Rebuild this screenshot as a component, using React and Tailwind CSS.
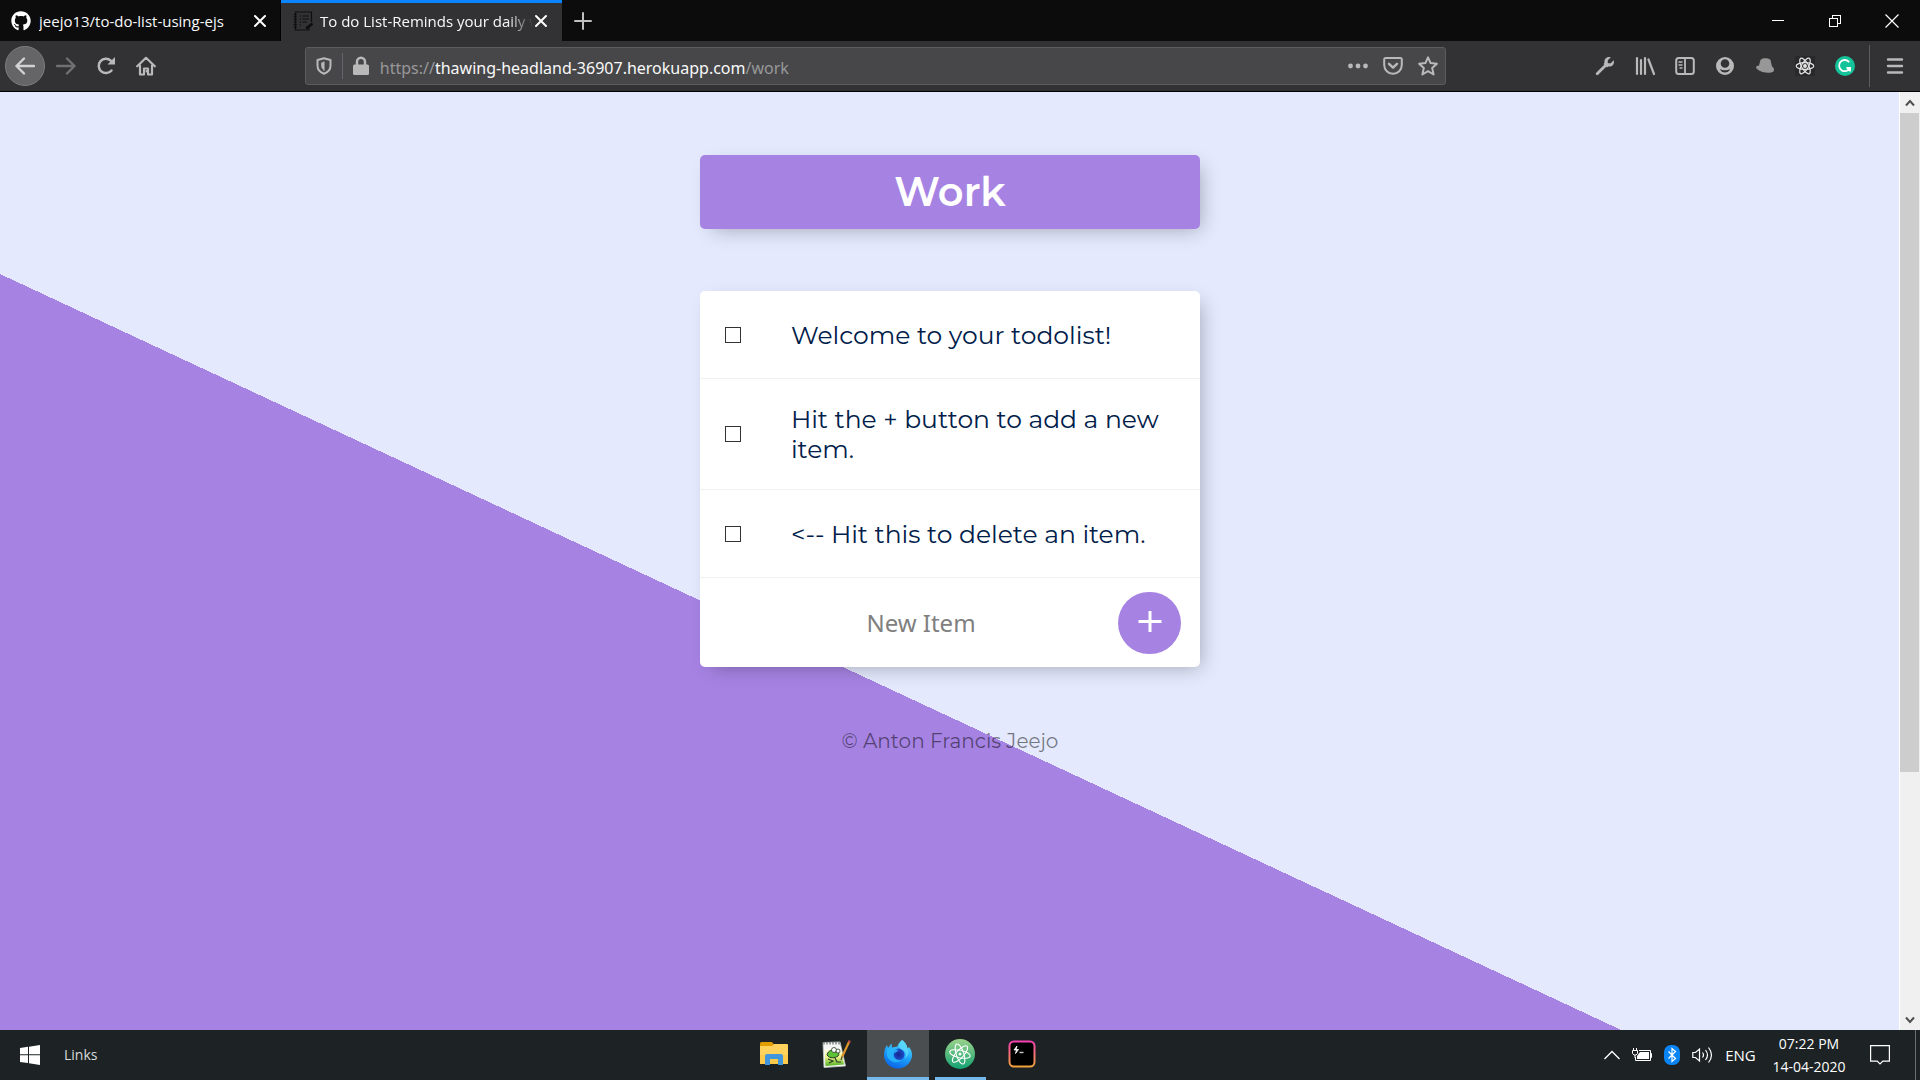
import { FaGithub } from "react-icons/fa";

const items = [
  "Welcome to your todolist!",
  "Hit the + button to add a new item.",
  "<-- Hit this to delete an item.",
];

function Svg({ children, className = "size-5", viewBox = "0 0 20 20" }) {
  return (
    <svg
      viewBox={viewBox}
      className={className}
      fill="none"
      stroke="currentColor"
      strokeWidth="2"
      strokeLinecap="round"
      strokeLinejoin="round"
      aria-hidden="true"
    >
      {children}
    </svg>
  );
}

function CloseIcon() {
  return (
    <Svg className="size-4" viewBox="0 0 16 16">
      <path d="M3 3l10 10M13 3L3 13" />
    </Svg>
  );
}

function NotebookIcon() {
  return (
    <svg viewBox="0 0 20 20" className="size-5 shrink-0" fill="none" stroke="#0e0e10" strokeWidth="1.2" aria-hidden="true">
      <path d="M16 14.5V19H2.5V1H18.5V11" />
      <path d="M0.5 3.5H4M0.5 6H4M0.5 8.5H4M0.5 11H4M0.5 13.5H4M0.5 16H4" />
      <path d="M6.5 5h1.5M9.5 5H16M6.5 8h1.5M9.5 8H16M6.5 11h1.5M9.5 11H14M6.5 14h1.5" />
      <path d="M19.5 12.5L13 17.5" strokeWidth="2.4" />
    </svg>
  );
}

function TabBar() {
  return (
    <header className="flex h-[41px] shrink-0 items-stretch bg-[#0c0c0d] text-[#f9f9fa]">
      <div className="flex w-[281px] shrink-0 items-center border-r border-black pl-[11px] pr-3">
        <FaGithub className="size-5 shrink-0 text-white" />
        <span className="ml-2 min-w-0 flex-1 overflow-hidden whitespace-nowrap text-[15px] leading-5">jeejo13/to-do-list-using-ejs</span>
        <button aria-label="Close tab" className="ml-1.5 text-white">
          <CloseIcon />
        </button>
      </div>
      <div className="flex w-[281px] shrink-0 items-center border-t-3 border-[#0a84ff] bg-[#323234] pb-[3px] pl-3 pr-[13px]">
        <NotebookIcon />
        <span className="ml-[7px] min-w-0 flex-1 overflow-hidden whitespace-nowrap text-[15px] leading-5 mask-r-from-88% mask-r-to-100%">
          To do List-Reminds your daily works
        </span>
        <button aria-label="Close tab" className="text-white">
          <CloseIcon />
        </button>
      </div>
      <button aria-label="New tab" className="flex w-[42px] items-center justify-center text-[#c0c0c1]">
        <Svg className="size-[18px]" viewBox="0 0 18 18">
          <path d="M9 1v16M1 9h16" />
        </Svg>
      </button>
      <div className="ml-auto flex">
        <button aria-label="Minimize" className="flex w-[57px] items-center justify-center">
          <svg viewBox="0 0 14 14" className="size-3.5" stroke="white" fill="none" shapeRendering="crispEdges"><path d="M1 6.5h12" /></svg>
        </button>
        <button aria-label="Restore" className="flex w-[57px] items-center justify-center">
          <svg viewBox="0 0 14 14" className="size-3.5" stroke="white" fill="none" shapeRendering="crispEdges">
            <path d="M1.5 4.5h8v8h-8zM4.5 4.5V1.5h8v8H9.5" />
          </svg>
        </button>
        <button aria-label="Close window" className="flex w-[57px] items-center justify-center">
          <svg viewBox="0 0 14 14" className="size-3.5" stroke="white" strokeWidth="1.2" fill="none"><path d="M0.5 0.5l13 13M13.5 0.5l-13 13" /></svg>
        </button>
      </div>
    </header>
  );
}

function ToolButton({ label, children }) {
  return (
    <button aria-label={label} className="flex h-10 w-10 shrink-0 items-center justify-center">
      {children}
    </button>
  );
}

function Toolbar() {
  return (
    <nav aria-label="Browser toolbar" className="flex h-[51px] shrink-0 items-center border-b border-black bg-[#323234] pl-[5px] text-[#b9b9ba]">
      <button aria-label="Back" className="flex size-10 shrink-0 items-center justify-center rounded-full border border-[#7d7d7e] bg-[#656567] text-[#d2d2d3]">
        <Svg><path d="M19 10H1.5M9 2.5L1.5 10L9 17.5" strokeWidth="2.4" /></Svg>
      </button>
      <button aria-label="Forward" className="flex h-10 w-[41px] shrink-0 items-center justify-center text-[#707071]">
        <Svg><path d="M1 10h17.5M11 2.5l7.5 7.5l-7.5 7.5" strokeWidth="2.4" /></Svg>
      </button>
      <ToolButton label="Reload">
        <Svg>
          <path d="M15.5 14.5A7.2 7.2 0 1 1 14.8 4.6" strokeWidth="2.5" />
          <path d="M19 1V8.5H11.500z" fill="currentColor" stroke="none" />
        </Svg>
      </ToolButton>
      <ToolButton label="Home">
        <Svg>
          <path d="M1.2 10.3L10 1.8l8.8 8.5M4 9.5V18.5h4V12.5h4v6h4V9.5" strokeWidth="2.2" />
          <path d="M10.5 15v.5" />
        </Svg>
      </ToolButton>
      <div className="min-w-4 flex-[139]" />
      <div className="flex h-[38px] min-w-0 flex-[1141] items-center rounded-[3px] border border-[#5c5c5e] bg-[#474749]">
        <button aria-label="Tracking protection" className="flex w-9 shrink-0 justify-center">
          <Svg className="size-[18px]" viewBox="0 0 18 18">
            <path d="M9 1.2L2.5 3V8.500c0 4 2.5 6.8 6.5 8.3c4-1.5 6.5-4.3 6.5-8.3V3z" />
            <path d="M9 5L6.2 5.500V8.500c0 2 1 3.5 2.8 4.7z" fill="currentColor" stroke="none" />
            <path d="M9 4.8V13.5" strokeWidth="1" />
          </Svg>
        </button>
        <span className="h-[26px] w-px bg-[#65656c]" />
        <button aria-label="Site information" className="flex w-9 shrink-0 justify-center">
          <Svg className="size-5">
            <path d="M6 9V5.8a4 4 0 0 1 8 0V9" strokeWidth="2.5" />
            <rect x="2" y="8.5" width="16" height="10.5" rx="1.5" fill="currentColor" stroke="none" />
          </Svg>
        </button>
        <a href="https://thawing-headland-36907.herokuapp.com/work" className="ml-px min-w-0 flex-1 overflow-hidden whitespace-nowrap pt-[3px] font-['Noto_Sans',sans-serif] text-base leading-6 text-[#98989a]">
          https://<span className="text-[#f9f9fa]">thawing-headland-36907.herokuapp.com</span>/work
        </a>
        <button aria-label="Page actions" className="flex w-[35px] shrink-0 justify-center">
          <Svg>
            <g fill="currentColor" stroke="none">
              <circle cx="2.5" cy="10" r="2.4" /><circle cx="10" cy="10" r="2.4" /><circle cx="17.5" cy="10" r="2.4" />
            </g>
          </Svg>
        </button>
        <button aria-label="Save to Pocket" className="flex w-[35px] shrink-0 justify-center">
          <Svg>
            <path d="M2.5 2h15a1.3 1.3 0 0 1 1.3 1.3V9a8.8 8.8 0 0 1-17.6 0V3.3A1.3 1.3 0 0 1 2.5 2z" />
            <path d="M6 7.8l4 3.9l4-3.9" strokeWidth="2.4" />
          </Svg>
        </button>
        <button aria-label="Bookmark this page" className="flex w-[35px] shrink-0 justify-center">
          <Svg>
            <path d="M10 1.3l2.6 5.8l6.3.7l-4.7 4.2l1.4 6.5L10 15.2l-5.6 3.3l1.4-6.5L1.1 7.8l6.3-.7z" />
          </Svg>
        </button>
      </div>
      <div className="min-w-4 flex-[139]" />
      <ToolButton label="Developer tools">
        <Svg>
          <path d="M2.2 17.8L10.5 9.5" strokeWidth="2.8" />
          <path d="M15.8 1.3L12.8 4.3V7.2H15.7L18.7 4.2C20 8 17 11.2 13.2 10.5L12 11.5L8.5 8L9.5 6.8C8.8 3 12 0 15.8 1.300z" fill="currentColor" stroke="none" />
        </Svg>
      </ToolButton>
      <ToolButton label="Library">
        <Svg><path d="M2 2v16M6 4v14M10 2v16M13.5 3.5L19 18" strokeWidth="2.2" /></Svg>
      </ToolButton>
      <ToolButton label="Sidebars">
        <Svg>
          <rect x="1.2" y="2" width="17.6" height="16" rx="2.5" />
          <path d="M10 2.5v15" strokeWidth="1.8" />
          <path d="M4 6h3M4 9h3M5 12h2" strokeWidth="1.4" />
        </Svg>
      </ToolButton>
      <ToolButton label="Account">
        <Svg>
          <path fillRule="evenodd" d="M10 1a9 9 0 1 0 0 18a9 9 0 0 0 0-18zM10 3.200a4.300 4.300 0 0 1 4.300 4.300a4.300 4.300 0 0 1-8.600 0A4.300 4.300 0 0 1 10 3.200zM4.800 13c3 1.800 7.400 1.800 10.400 0c-1 2.400-3 3.600-5.200 3.600s-4.200-1.200-5.200-3.600z" fill="currentColor" stroke="none" />
        </Svg>
      </ToolButton>
      <ToolButton label="Hat extension">
        <svg viewBox="0 0 20 20" className="size-5" aria-hidden="true">
          <path d="M5.5 4C7 1.500 14 1.800 15.5 4L17 10.5C19 11.5 19.5 14 18.5 15.5C15 18 7 17 2 13C0.5 11.5 0.8 9.8 4 9.500z" fill="#979798" />
        </svg>
      </ToolButton>
      <ToolButton label="React developer tools">
        <svg viewBox="0 0 20 20" className="size-5 bg-[#29292b]" fill="none" stroke="#e4e4e4" strokeWidth="1.2" aria-hidden="true">
          <ellipse cx="10" cy="10" rx="8.8" ry="3.4" />
          <ellipse cx="10" cy="10" rx="8.8" ry="3.4" transform="rotate(60 10 10)" />
          <ellipse cx="10" cy="10" rx="8.8" ry="3.4" transform="rotate(120 10 10)" />
          <circle cx="10" cy="10" r="1.3" fill="#e4e4e4" />
        </svg>
      </ToolButton>
      <ToolButton label="Grammarly">
        <svg viewBox="0 0 20 20" className="size-5" fill="none" aria-hidden="true">
          <circle cx="10" cy="10" r="10" fill="#15c39a" />
          <path d="M14.2 6.2A5.6 5.6 0 1 0 14.8 12H11.5M15 11.500V15.5" stroke="white" strokeWidth="1.8" />
        </svg>
      </ToolButton>
      <span className="ml-1 h-[42px] w-px shrink-0 bg-[#5c5c5e]" />
      <button aria-label="Open menu" className="flex h-10 w-[50px] shrink-0 items-center justify-center">
        <Svg className="size-[18px]" viewBox="0 0 18 18"><path d="M2 2.5h14M2 9h14M2 15.5h14" strokeWidth="2.4" /></Svg>
      </button>
    </nav>
  );
}

function TodoPage() {
  return (
    <main className="min-h-[1250px] bg-[linear-gradient(25deg,#a683e3_50%,#e4e9fd_50%)] pt-[63px] font-[Montserrat,Inter,sans-serif]">
      <div className="mx-auto flex h-[74px] w-[500px] max-w-full items-center justify-center rounded-[5px] bg-[#a683e3] shadow-[6px_6px_19px_-6px_rgba(0,0,0,0.3)]">
        <h1 className="text-[40px] leading-[52px] font-semibold text-white">Work</h1>
      </div>
      <div className="mx-auto mt-[62px] w-[500px] max-w-full rounded-[5px] bg-white shadow-[6px_6px_19px_-6px_rgba(0,0,0,0.3)]">
        {items.map((text, i) => (
          <label key={text} className="flex min-h-[88px] items-center border-b border-[#f1f1f1] px-[25px] py-[25px]">
            <input type="checkbox" name={"item" + i} className="size-4 shrink-0 appearance-none border border-[#333333] bg-white checked:bg-[#a683e3]" />
            <span className="ml-[50px] text-[25px] leading-[30px] text-[#00204a]">{text}</span>
          </label>
        ))}
        <form className="flex h-[89px] items-center pr-[19px]" onSubmit={(e) => e.preventDefault()}>
          <input
            type="text"
            name="newItem"
            aria-label="New Item"
            placeholder="New Item"
            autoComplete="off"
            className="ml-6 h-[60px] min-w-0 flex-1 bg-transparent text-center font-['Noto_Sans',sans-serif] text-2xl text-[#00204a] outline-none placeholder:text-[#808080]"
          />
          <button aria-label="Add item" className="flex h-[62px] w-[63px] shrink-0 items-center justify-center rounded-full bg-[#a683e3] text-white">
            <svg viewBox="0 0 24 24" className="size-6" stroke="currentColor" strokeWidth="3" fill="none"><path d="M12 0v21M0.500 10.500h23" /></svg>
          </button>
        </form>
      </div>
      <footer className="mt-[61px] text-center text-[20px] leading-[26px] text-black/50">© Anton Francis Jeejo</footer>
    </main>
  );
}

function ScrollBar() {
  return (
    <div className="-ml-px flex w-[21px] shrink-0 flex-col border-l border-white bg-[#f0f0f0] text-[#505050]">
      <button aria-label="Scroll up" className="flex h-[21px] w-[19px] items-center justify-center">
        <svg viewBox="0 0 10 8" className="h-2 w-2.5" fill="none" stroke="currentColor" strokeWidth="2"><path d="M1 6.5L5 2l4 4.5" /></svg>
      </button>
      <div className="flex-1">
        <div className="h-[73.6%] w-[19px] bg-[#cdcdcd]" />
      </div>
      <button aria-label="Scroll down" className="flex h-[21px] w-[19px] items-center justify-center">
        <svg viewBox="0 0 10 8" className="h-2 w-2.5" fill="none" stroke="currentColor" strokeWidth="2"><path d="M1 1.5L5 6l4-4.5" /></svg>
      </button>
    </div>
  );
}

function ExplorerIcon() {
  return (
    <svg viewBox="0 0 28 25" className="h-[25px] w-7" aria-hidden="true">
      <path d="M0 2.5Q0 1 1.5 1H12l2 2.500v4H0z" fill="#e29e00" />
      <path d="M0 5h12l2-2h13q1 0 1 1v19H0z" fill="#ffd25e" />
      <path d="M0 14h28v9H0z" fill="#fcc441" opacity="0.6" />
      <path d="M5 24V15q0-2 2-2h14q2 0 2 2v9h-5v-6h-8v6z" fill="#4296dd" />
    </svg>
  );
}

function NotepadIcon() {
  return (
    <svg viewBox="0 0 30 30" className="size-[30px]" fill="none" aria-hidden="true">
      <defs>
        <linearGradient id="meadow" x1="0" y1="0" x2="0" y2="1">
          <stop offset="0" stopColor="#ffffff" /><stop offset="0.5" stopColor="#eef58a" /><stop offset="1" stopColor="#4fae20" />
        </linearGradient>
      </defs>
      <path d="M2 3.5L19 3L24.5 27L3 28.500z" fill="#f5f7f4" stroke="#c4cbc4" strokeWidth="0.8" />
      <path d="M3.5 10L20 9L23 25.5L4.5 27z" fill="url(#meadow)" />
      <path d="M3 3v2.500M6 3v2.500M9 3v2.500M12 3v2.500M15 3v2.500M18 3v2.5" stroke="#6a6f6a" strokeWidth="1.2" />
      <path d="M6 16c1-5 6-6 8-3c3-1 5 2 3 4c-3 2-8 3-11-1z" fill="#5cc236" stroke="#263b20" />
      <circle cx="13" cy="11" r="2.5" fill="white" stroke="#263b20" strokeWidth="0.8" />
      <circle cx="17" cy="12" r="2" fill="white" stroke="#263b20" strokeWidth="0.8" />
      <path d="M7 20l5 2l-4 2M14 19l2 4h4" stroke="#263b20" strokeWidth="1.2" />
      <path d="M28 3L21 18" stroke="#e0972a" strokeWidth="2.2" />
      <path d="M28.8 1.5L28 3.5" stroke="#c2464a" strokeWidth="2.4" />
      <path d="M21.2 17.5L20 21" stroke="#564434" strokeWidth="1.2" />
    </svg>
  );
}

function FirefoxIcon() {
  return (
    <svg viewBox="0 0 30 30" className="size-[30px]" aria-hidden="true">
      <defs>
        <linearGradient id="flame" x1="0.7" y1="0" x2="0.3" y2="1">
          <stop offset="0" stopColor="#5ee3ff" /><stop offset="0.5" stopColor="#1ea4fb" /><stop offset="1" stopColor="#0a62e8" />
        </linearGradient>
        <radialGradient id="globe">
          <stop offset="0" stopColor="#17268d" /><stop offset="1" stopColor="#1b50cf" />
        </radialGradient>
      </defs>
      <path d="M19 1C23 4 24 7 24.5 9.5L26 8C28.5 11 29.2 14 29 17C28 24.5 22 29.5 15 29.5C7 29.5 1 23.5 1 16C1 12 2 9 4 6L5 9L8.5 4.5L9 8.5L14.5 7.5C15 4.5 17 3 19 1z" fill="url(#flame)" />
      <circle cx="15.5" cy="15.5" r="6" fill="url(#globe)" />
      <path d="M4 10C7 8.500 12 9 15.5 11.500L11 14.5C10 19 14 22 19 20.5C15 25 7 24 4 17z" fill="#28b7fb" opacity="0.85" />
      <path d="M19 1C14.5 6 16 9.500 21 12C24 15 23 18 21 20C26 17 26.5 12 24.5 9.5C24 6 22 3 19 1z" fill="#5bd8ff" opacity="0.8" />
    </svg>
  );
}

function AtomIcon() {
  return (
    <svg viewBox="0 0 30 30" className="size-[30px]" fill="none" stroke="white" strokeWidth="1.1" aria-hidden="true">
      <defs>
        <linearGradient id="atom" x1="0" y1="0" x2="0" y2="1">
          <stop offset="0" stopColor="#9bd28a" /><stop offset="1" stopColor="#12a272" />
        </linearGradient>
      </defs>
      <circle cx="15" cy="15" r="15" fill="url(#atom)" stroke="none" />
      <ellipse cx="15" cy="15" rx="10.5" ry="3.8" transform="rotate(12 15 15)" />
      <ellipse cx="15" cy="15" rx="10.5" ry="3.8" transform="rotate(72 15 15)" />
      <ellipse cx="15" cy="15" rx="10.5" ry="3.8" transform="rotate(132 15 15)" />
      <circle cx="15" cy="15" r="1.5" fill="white" stroke="none" />
    </svg>
  );
}

function HyperIcon() {
  return (
    <svg viewBox="0 0 28 28" className="size-7" fill="none" aria-hidden="true">
      <defs>
        <linearGradient id="rim" x1="0" y1="0" x2="0" y2="1">
          <stop offset="0" stopColor="#f740b0" /><stop offset="1" stopColor="#f2a13c" />
        </linearGradient>
      </defs>
      <rect x="1.5" y="1.5" width="25" height="25" rx="4.5" fill="black" stroke="url(#rim)" strokeWidth="2" />
      <path d="M9 6L6 10h2.500L7.500 13.500L10.500 9.500H8z" fill="white" stroke="white" strokeWidth="0.8" />
      <path d="M11.5 12.5h4" stroke="#c9c9c9" strokeWidth="1.4" />
    </svg>
  );
}

function TaskButton({ label, active, children }) {
  return (
    <button aria-label={label} className={active ? "flex w-[62px] items-center justify-center border-b-3 border-[#76b9ed] bg-[#4b4e50]" : "flex w-[62px] items-center justify-center border-b-3 border-transparent"}>
      {children}
    </button>
  );
}

function Taskbar() {
  return (
    <footer className="flex h-[50px] shrink-0 items-stretch bg-[#1d2325] text-white">
      <div className="flex w-[743px] min-w-0 items-center">
        <button aria-label="Start" className="flex w-[60px] justify-center">
          <svg viewBox="0 0 20 20" className="size-5" fill="white"><path d="M0 3L8 1.800V9.300H0zM9 1.700L20 0V9.300H9zM0 10.200H8V17.900L0 17zM9 10.200H20V20L9 18.200z" /></svg>
        </button>
        <button className="ml-1 text-sm leading-5 text-[#d8dadb]">Links</button>
      </div>
      <TaskButton label="File Explorer"><ExplorerIcon /></TaskButton>
      <TaskButton label="Notepad++"><NotepadIcon /></TaskButton>
      <TaskButton label="Firefox" active><FirefoxIcon /></TaskButton>
      <button aria-label="Atom" className="flex w-[62px] flex-col items-center">
        <span className="flex flex-1 items-center"><AtomIcon /></span>
        <span className="h-[3px] w-[51px] bg-[#76b9ed]" />
      </button>
      <TaskButton label="Hyper"><HyperIcon /></TaskButton>
      <div className="ml-auto flex items-center">
        <button aria-label="Show hidden icons" className="flex w-7 justify-center">
          <svg viewBox="0 0 16 10" className="h-2.5 w-4" fill="none" stroke="white" strokeWidth="1.3"><path d="M0.5 9L8 1.5L15.5 9" /></svg>
        </button>
        <button aria-label="Battery charging" className="ml-1.5">
          <svg viewBox="0 0 20 14" className="h-3.5 w-5" fill="none" stroke="white">
            <path d="M7 2.5h11.500v10H3.500V9M18.5 5.5h1v4h-1" />
            <path d="M8 4h9v7H5V8z" fill="white" stroke="none" />
            <path d="M0.5 2.5h5v3L4 7H2L0.5 5.500zM1.5 0v2M4.500 0v2M3 7v3" />
          </svg>
        </button>
        <button aria-label="Bluetooth" className="ml-3">
          <svg viewBox="0 0 16 20" className="h-5 w-4" fill="none"><rect width="16" height="20" rx="7" fill="#0a84f5" /><path d="M4.5 6.5l7 7L8 16.500v-13l3.5 3l-7 7" stroke="white" strokeWidth="1.2" /></svg>
        </button>
        <button aria-label="Volume" className="ml-3">
          <svg viewBox="0 0 21 18" className="h-[18px] w-[21px]" fill="none" stroke="white" strokeWidth="1.2">
            <path d="M0.8 6.500H3.500L7.5 3V15L3.5 11.500H0.800z" /><path d="M10.5 6.5q2 2.5 0 5M13.5 4q4 5 0 10M16.5 1.5q6 7.5 0 15" />
          </svg>
        </button>
        <button aria-label="Language" className="ml-3 w-[31px] text-[15px] leading-5">ENG</button>
        <time dateTime="2020-04-14T19:22" className="ml-3 flex w-[82px] flex-col items-center whitespace-nowrap text-[14px] leading-[23px]">
          <span>07:22 PM</span>
          <span>14-04-2020</span>
        </time>
        <button aria-label="Notifications" className="ml-5">
          <svg viewBox="0 0 20 20" className="size-5" fill="none" stroke="white" strokeWidth="1.2"><path d="M0.6 0.6h18.800v15.500h-6.500L10 19L7.200 16.100H0.600z" /></svg>
        </button>
        <span className="ml-[25px] mr-1 h-[50px] w-px bg-[#6b6f71]" />
      </div>
    </footer>
  );
}

export default function App() {
  return (
    <div className="flex h-screen flex-col overflow-hidden font-['Segoe_UI','Open_Sans',sans-serif]">
      <TabBar />
      <Toolbar />
      <div className="flex min-h-0 flex-1">
        <div className="min-w-0 flex-1 overflow-hidden">
          <TodoPage />
        </div>
        <ScrollBar />
      </div>
      <Taskbar />
    </div>
  );
}
